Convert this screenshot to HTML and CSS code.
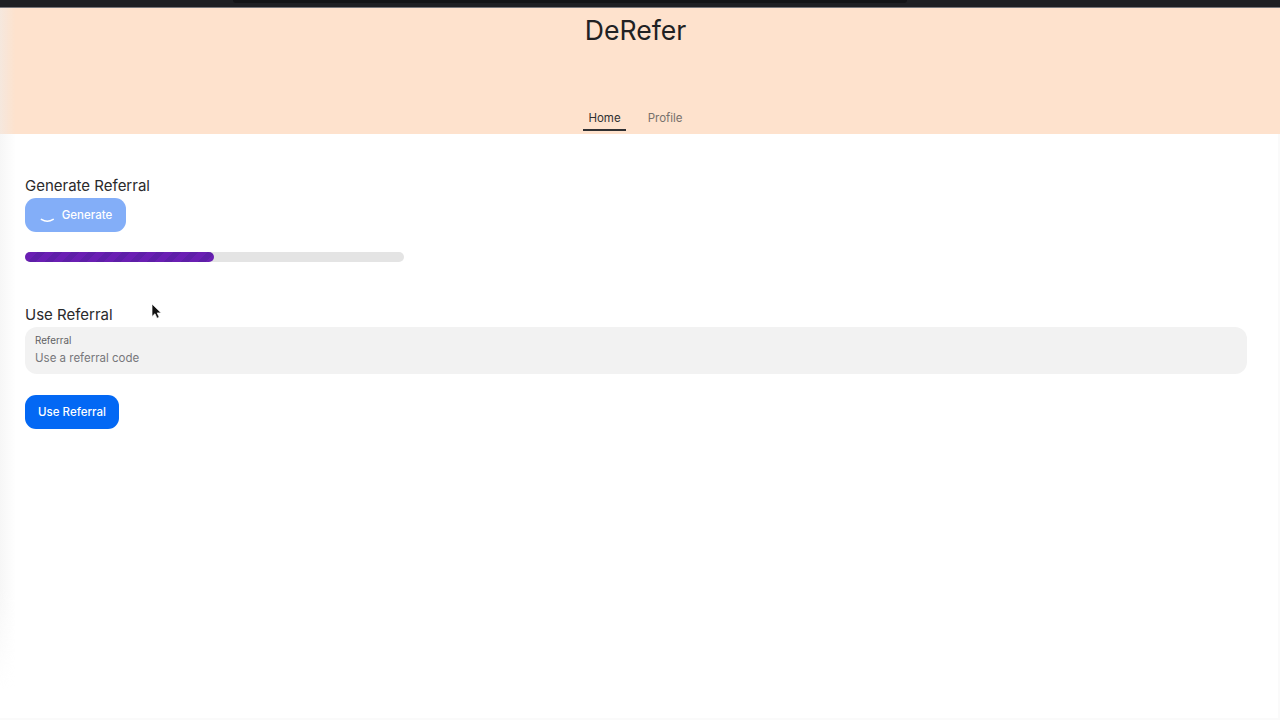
FILE: index.html
```html
<!DOCTYPE html>
<html lang="en">
<head>
<meta charset="utf-8">
<title>DeRefer</title>
<link rel="stylesheet" href="styles.css">
</head>
<body>
<div class="topbar"><div class="topbar-notch"></div></div>
<header class="hero">
  <h1 class="brand">DeRefer</h1>
  <nav class="tabs">
    <a class="tab tab-active">Home</a>
    <a class="tab">Profile</a>
  </nav>
</header>
<main class="content">
  <section class="generate">
    <h2 class="heading">Generate Referral</h2>
    <button class="btn btn-loading">
      <svg class="spinner" width="20" height="20" viewBox="0 0 20 20" fill="none"><path d="M4.4 14.4q5.9 3.8 11.8 0" stroke="#fff" stroke-width="1.6" stroke-linecap="round"/></svg>
      <span>Generate</span>
    </button>
    <div class="progress"><div class="progress-fill"></div></div>
  </section>
  <section class="use">
    <h2 class="heading">Use Referral</h2>
    <label class="field">
      <span class="field-label">Referral</span>
      <span class="field-input">Use a referral code</span>
    </label>
    <button class="btn btn-primary">Use Referral</button>
  </section>
</main>
<div class="edge-shade"></div>
<svg class="cursor" width="12" height="18" viewBox="0 0 12 18"><path d="M1 1v12.5l3-2.8 2 4.6 2.2-1-2-4.4h4z" fill="#111" stroke="#fff" stroke-width=".7"/></svg>
</body>
</html>
```
FILE: styles.css
```css
* { box-sizing: border-box; }
html, body { margin: 0; height: 100%; }
body {
  font-family: Inter, "Liberation Sans", sans-serif;
  background: #fff;
  color: #1f1f22;
  overflow: hidden;
  position: relative;
  box-shadow: inset -2px -2px 0 #fafafa;
}
.topbar {
  height: 8px;
  background: #1e1f23;
  border-bottom: 1px solid #77767a;
  padding-left: 233px;
}
.topbar-notch {
  width: 674px;
  height: 3px;
  background: #131417;
  border-radius: 0 0 4px 4px;
}
.hero {
  height: 126px;
  background: #fee2cd;
  display: flex;
  flex-direction: column;
  align-items: center;
  padding-right: 9px;
}
.brand {
  margin: 4px 0 0;
  font-size: 26.6px;
  line-height: 36px;
  font-weight: 400;
  color: #212123;
}
.tabs {
  margin-top: auto;
  display: flex;
  gap: 17px;
  padding-bottom: 3px;
}
.tab {
  display: block;
  padding: 0 5px;
  height: 26px;
  line-height: 27px;
  font-size: 11.5px;
  color: #77716c;
}
.tab-active {
  color: #303032;
  border-bottom: 2px solid #303032;
}
.content {
  padding: 43px 33px 0 25px;
}
.heading {
  margin: 0;
  font-size: 15px;
  line-height: 18px;
  font-weight: 400;
  color: #2a2a2c;
}
.btn {
  display: flex;
  align-items: center;
  justify-content: center;
  height: 33.5px;
  border: 0;
  border-radius: 11px;
  font-family: inherit;
  font-size: 11.5px;
  font-weight: 500;
  color: #fff;
}
.btn-loading {
  margin-top: 3px;
  width: 101px;
  padding: 0 8px 0 6px;
  gap: 5px;
  background: #83aef8;
}
.btn-primary {
  margin-top: 21px;
  width: 94px;
  background: #0368f4;
}
.progress {
  margin-top: 20.5px;
  width: 379px;
  height: 10px;
  border-radius: 5px;
  background: #e4e4e4;
}
.progress-fill {
  width: 189px;
  height: 100%;
  border-radius: 5px;
  background: repeating-linear-gradient(-45deg, #6a1fb3 0 6px, #5e1fa8 6px 12px);
}
.use { margin-top: 44px; }
.field {
  display: flex;
  flex-direction: column;
  margin-top: 3px;
  height: 47px;
  padding: 8px 10px 0;
  border-radius: 12px;
  background: #f2f2f2;
}
.field-label {
  font-size: 9.8px;
  line-height: 12px;
  color: #5f5f63;
}
.field-input {
  margin-top: 3px;
  font-size: 11.5px;
  line-height: 16px;
  color: #77777b;
}
.edge-shade {
  position: absolute;
  left: 0;
  top: 8px;
  bottom: 30px;
  width: 16px;
  background: linear-gradient(90deg, rgba(238,238,238,.5), rgba(238,238,238,0));
  -webkit-mask-image: linear-gradient(180deg, #000 85%, transparent);
  mask-image: linear-gradient(180deg, #000 85%, transparent);
  pointer-events: none;
}
.cursor {
  position: absolute;
  left: 151px;
  top: 303px;
}
```
